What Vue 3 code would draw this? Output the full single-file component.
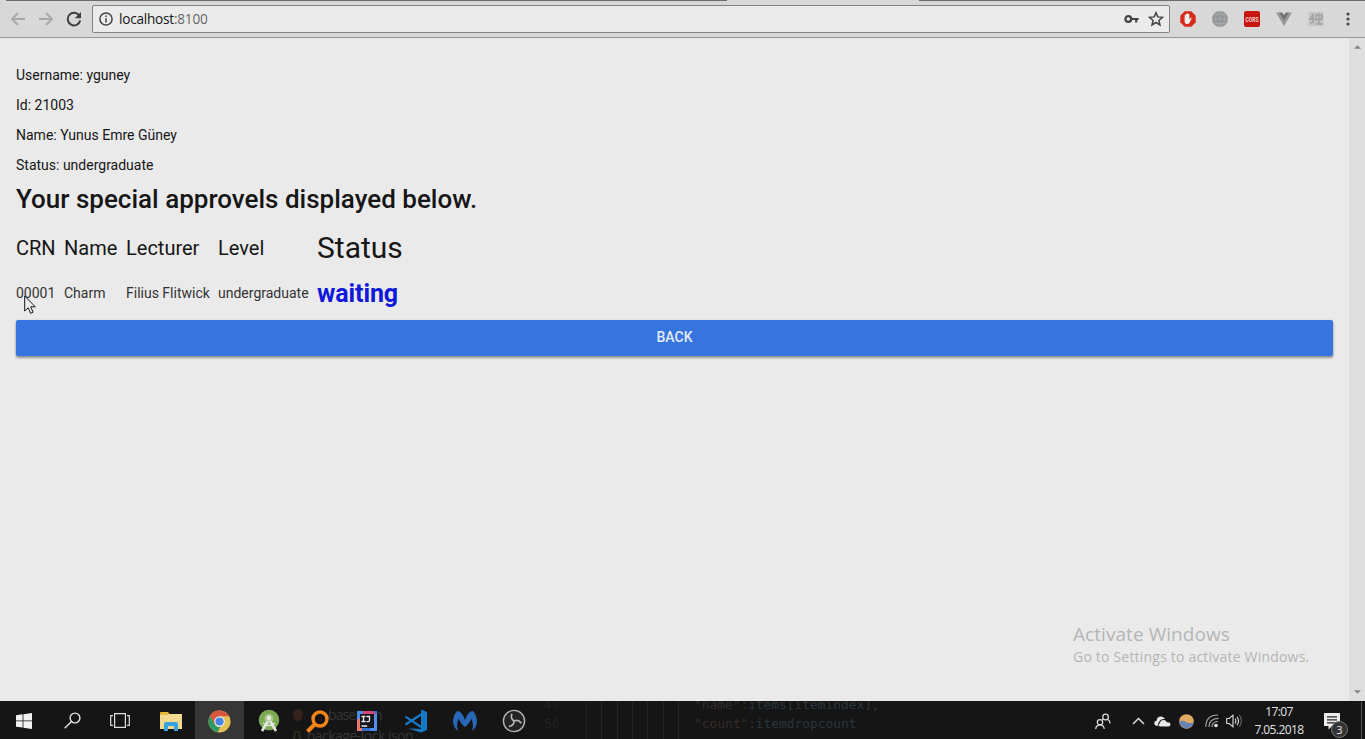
<script setup>
const info = [
  ['Username', 'yguney'],
  ['Id', '21003'],
  ['Name', 'Yunus Emre Güney'],
  ['Status', 'undergraduate'],
]
const columns = ['CRN', 'Name', 'Lecturer', 'Level', 'Status']
const row = ['00001', 'Charm', 'Filius Flitwick', 'undergraduate', 'waiting']
</script>

<template>
  <div class="screen">
    <header class="toolbar">
      <svg class="ico back" viewBox="0 0 16 16"><path d="M15 8H2M8 2 2 8l6 6" /></svg>
      <svg class="ico forward" viewBox="0 0 16 16"><path d="M1 8h13M8 2l6 6-6 6" /></svg>
      <svg class="ico reload" viewBox="0 0 16 16"><path d="M13.3 4.6A6.3 6.3 0 1 0 14.2 9.5" /><path class="solid" d="M15 1v6.3H8.8z" /></svg>
      <div class="omnibox">
        <svg class="site" viewBox="0 0 14 14"><circle cx="7" cy="7" r="6.1" /><path d="M7 6.2v4.2M7 3.4v1.6" /></svg>
        <span class="url">localhost<span class="port">:8100</span></span>
        <svg class="key" viewBox="0 0 15 10"><circle cx="4.3" cy="5" r="2.9" /><path d="M7 5h7.6M12.2 5v3.6" /></svg>
        <svg class="star" viewBox="0 0 16 16"><path d="m8 1.7 1.8 4.2 4.7.4-3.6 3.1 1.1 4.6L8 11.5 4 14l1.1-4.6-3.6-3.1 4.7-.4z" /></svg>
      </div>
      <div class="extensions">
        <svg viewBox="0 0 16 16">
          <path fill="#d8291c" d="M4.7.3h6.6l4.4 4.4v6.6l-4.4 4.4H4.7L.3 11.3V4.7z" />
          <path fill="#eee" d="M4.6 7.5V4.3q.5-.7 1.1 0V3.2q.6-.7 1.2 0v-.5q.7-.7 1.3 0v.6q.6-.6 1.2 0v5.3l1.2-1.6q.7-.5 1.2.1l-2.3 4.8q-.7 1.1-2.2 1.1-2.7 0-2.7-2.8z" />
        </svg>
        <svg viewBox="0 0 16 16"><circle cx="8" cy="8" r="8" fill="#929696" /><path fill="none" stroke="#a9adad" stroke-width=".8" d="M8 0v16M0 8h16M2 3.5h12M2 12.5h12M8 0C2 5 2 11 8 16M8 0c6 5 6 11 0 16" /></svg>
        <svg viewBox="0 0 16 16"><rect width="16" height="16" rx="2" fill="#c9150f" /><text x="8" y="10.7" text-anchor="middle" textLength="13" lengthAdjust="spacingAndGlyphs" class="cors">CORS</text></svg>
        <svg viewBox="0 0 16 16"><path fill="#989898" d="M0 1.5h4L8 8l4-6.5h4L8 15z" /><path fill="#707070" d="M3.2 1.5h3L8 4.3l1.8-2.8h3L8 9.5z" /></svg>
        <svg viewBox="0 0 16 16"><rect x=".5" y="1" width="15" height="14" fill="#c5c5c5" /><path fill="none" stroke="#a3a3a3" stroke-width="1.4" d="M2 9l3-6v8M1 8h6M8 3v7M7.5 4h6v4.5h-6M11 2v11M2 12l4-1M8 13h7M14 3v5" /></svg>
      </div>
      <svg class="menu" viewBox="0 0 4 14"><circle cx="2" cy="2" r="1.6" /><circle cx="2" cy="7" r="1.6" /><circle cx="2" cy="12" r="1.6" /></svg>
      <i class="frame-edge left"></i><i class="frame-edge right"></i>
    </header>

    <div class="viewport">
      <main class="page">
        <p v-for="[label, value] in info" :key="label">{{ label }}: {{ value }}</p>
        <h1>Your special approvels displayed below.</h1>
        <div class="table">
          <span v-for="(c, i) in columns" :key="c" class="head" :class="'h' + i">{{ c }}</span>
          <span v-for="(c, i) in row" :key="c" class="cell" :class="'c' + i">{{ c }}</span>
        </div>
        <button class="back-button">BACK</button>
      </main>
      <aside class="scrollbar">
        <svg viewBox="0 0 8 4"><path d="M0 4 4 0l4 4z" /></svg>
        <svg viewBox="0 0 8 4"><path d="M0 0h8L4 4z" /></svg>
      </aside>
      <div class="watermark">
        <div class="wm-title">Activate Windows</div>
        <div class="wm-sub">Go to Settings to activate Windows.</div>
      </div>
      <svg class="cursor" viewBox="0 0 12 20"><path d="M.7 1v15l3.5-3.3 2.4 5.6 2.5-1.1-2.4-5.4h4.6z" /></svg>
    </div>

    <footer class="taskbar">
      <div class="ghost">
        <span class="g-file">base.json</span>
        <span class="g-lock"><b>{}</b> package-lock.json</span>
        <span class="g-flame"></span>
        <span class="g-num n49">49</span><span class="g-num n50">50</span>
        <span class="g-guides"></span>
        <span class="g-name"><em>"name"</em>:items[itemindex],</span>
        <span class="g-count"><em>"count"</em>:itemdropcount</span>
      </div>
      <nav class="system">
        <svg width="16" height="16" viewBox="0 0 16 16"><path fill="#f2f2f2" d="M0 2.2 6.6 1.3v6.2H0zM7.4 1.2 16 0v7.5H7.4zM0 8.3h6.6v6.3L0 13.7zM7.4 8.3H16V16l-8.6-1.2z" /></svg>
        <svg width="17" height="17" viewBox="0 0 17 17"><g fill="none" stroke="#e6e6e6" stroke-width="1.4"><circle cx="11" cy="6" r="4.9" /><path d="M7.5 9.5.7 16.2" /></g></svg>
        <svg width="20" height="15" viewBox="0 0 20 15"><g fill="none" stroke="#dedede" stroke-width="1.2"><path d="M4.6.7h10.8v13.6H4.6zM3 2.7H.7v9.6H3M17 2.7h2.3v9.6H17" /></g></svg>
      </nav>
      <nav class="apps">
        <div class="slot"><svg width="22" height="19" viewBox="0 0 22 19"><path fill="#e8b83b" d="M0 1q0-1 1-1h7l1.5 2H22v6H0z" /><path fill="#f3d98f" d="M0 3h7.5L9 2h13v15H0z" /><path fill="#36a3df" d="M4 19v-7q0-2 2-2h10q2 0 2 2v7h-4v-5H8v5z" /></svg></div>
        <div class="slot active"><svg width="23" height="23" viewBox="0 0 24 24"><circle cx="12" cy="12" r="11.5" fill="#e5c054" /><path fill="#d8553f" d="M2 6.2A11.5 11.5 0 0 1 22 6.5H12L7 15z" /><path fill="#2d9b63" d="M2 6.2 7.2 15q2 3 5.7 2.6l-3 5.7A11.5 11.5 0 0 1 2 6.2z" /><circle cx="12" cy="12" r="5.5" fill="#eee" /><circle cx="12" cy="12" r="4.3" fill="#4586e8" /></svg></div>
        <div class="slot"><svg width="22" height="24" viewBox="0 0 22 24"><circle cx="11" cy="11" r="10.3" fill="#7ba954" /><circle cx="11" cy="9.5" r="4.6" fill="#a3c481" /><circle cx="11" cy="9" r="2.4" fill="#e5e8e0" /><path fill="none" stroke="#e3e7df" stroke-width="2.6" d="m10 12-6 10M12 12l6 10" /><path fill="none" stroke="#e3e7df" stroke-width="1.5" d="M5 14q6 5 12 0" /></svg></div>
        <div class="slot"><svg width="23" height="23" viewBox="0 0 23 23"><circle cx="14" cy="9" r="7" fill="none" stroke="#f48519" stroke-width="3.4" /><path stroke="#f48519" stroke-width="4" d="M9 14 1.5 21.5" /></svg></div>
        <div class="slot"><svg width="20" height="20" viewBox="0 0 20 20"><path fill="#2f6fd8" d="M0 0h20v20H0z" /><path fill="#d54778" d="M6 0h10l3 3-4 4H4z" /><path fill="#4e8fec" d="M0 0h6l-2 10H0zM15 6l5-4v18H13z" /><path fill="#e87a6c" d="M0 9 5 6v14H0z" /><path fill="#17151d" d="M3 3h14v14H3z" /><path fill="none" stroke="#eee" stroke-width="1.3" d="M4.5 5.5h4M6.5 5.5v5M4.5 10.5h4M9.5 5.5h3v3.8q0 1.3-1.5 1.3H9.5M4.5 15h5.7" /></svg></div>
        <div class="slot"><svg width="24" height="24" viewBox="0 0 24 24"><path fill="#1679c5" d="m17 .5 6 2.4v18l-6 2.6L4 19.5l13 .6z" /><path fill="none" stroke="#1679c5" stroke-width="2.2" d="M1.5 7.7 17 18M17 5.5 1.5 15.5" /></svg></div>
        <div class="slot"><svg width="24" height="22" viewBox="0 0 24 22"><path fill="#2867b5" d="M4 1q5 0 8 9 3-9 8-9 4 5 4 10.5T19 21q2-5-.4-12.2Q15 15 12 17 9 15 5.4 8.8 3 16 5 21 0 17 0 11.5T4 1z" /></svg></div>
        <div class="slot"><svg width="24" height="24" viewBox="0 0 24 24"><circle cx="12" cy="12" r="10.6" fill="#242424" stroke="#b5b5b5" stroke-width="1.4" /><path fill="none" stroke="#b5b5b5" stroke-width="1.7" d="M12 12Q8 9.2 10 4.8M12 12q4.5-1.8 7.2 2.2M12 12q.1 4.8-5 5.3" /></svg></div>
      </nav>
      <div class="tray">
        <svg class="people" width="17" height="17" viewBox="0 0 17 17"><g fill="none" stroke="#dcdcdc" stroke-width="1.25"><circle cx="10.6" cy="4" r="2.8" /><path d="M8.3 6q-.8.6-.9 1.2M12.6 6.4q2.2 1 2.5 4" /><circle cx="5" cy="9.2" r="2.7" /><path d="M.7 16q.4-4.1 4.3-4.1T9.2 16" /></g></svg>
        <svg class="up" width="13" height="8" viewBox="0 0 13 8"><path fill="none" stroke="#ddd" stroke-width="1.5" d="m1 7 5.5-5.5L12 7" /></svg>
        <svg class="cloud" width="17" height="11" viewBox="0 0 17 11"><path fill="#e8e8e8" d="M5.6 10.5Q4 8.5 6 7q.4-3 3.7-3 2.3 0 3.1 2.3h1q2.7.1 2.7 2.2 0 2-2.3 2z" /><path fill="#e8e8e8" d="M4.5 9.7H2.6Q.2 9.4.2 7.2.2 5 2.5 4.8 3 .5 7 .5q2.8 0 4 2.6Q6.4 2.6 5 6.2 3.2 7.4 4.5 9.7z" /></svg>
        <svg class="globe" width="15" height="15" viewBox="0 0 15 15"><circle cx="7.5" cy="7.5" r="7.3" fill="#e1aa62" /><path fill="#6683b3" d="M.2 7.6q3.5-2 6.7.4 3.6 2 7.8.2A7.3 7.3 0 0 1 .2 7.6z" /></svg>
        <svg class="wifi" width="14" height="14" viewBox="0 0 14 14"><g fill="none" stroke="#a9a9a9" stroke-width="1.2"><path d="M.8 12.8Q1 1 13 1M4 13q0-8.5 9.5-8.7M7 13q0-5.3 6-5.5" /></g><circle cx="11" cy="11.5" r="1.8" fill="#e2e2e2" /></svg>
        <svg class="volume" width="17" height="14" viewBox="0 0 17 14"><g fill="none" stroke="#ddd" stroke-width="1.1"><path d="M.7 4.5h2.5L7 1.2v11.6L3.2 9.5H.7zM9 4.5q1.7 2.5 0 5M11 2.7q3 4.3 0 8.6" /><path stroke="#666" d="M13.3 1q4.2 6 0 12" /></g></svg>
        <div class="clock"><span>17:07</span><span>7.05.2018</span></div>
        <div class="notice"><svg width="16" height="17" viewBox="0 0 16 17"><path fill="#ededed" d="M0 0h16v13H8l-3.5 3.5V13H0z" /><path stroke="#222" stroke-width="1.2" d="M3 3.8h10M3 6.8h10M3 9.8h10" /></svg><b>3</b></div>
        <i class="peek"></i>
      </div>
    </footer>
  </div>
</template>

<style>
body { margin: 0; overflow: hidden; }
</style>

<style scoped>
.screen { width: 1365px; height: 739px; display: flex; flex-direction: column; overflow: hidden; background: #eaeaea; color: #161616; font-family: Roboto, sans-serif; }
.screen * { box-sizing: border-box; }
svg { display: block; flex: none; }

.toolbar { position: relative; height: 38px; flex: none; display: flex; align-items: center; background: #d9d8d9; border-bottom: 1px solid #969596; padding: 1px 15px 0 10px; }
.ico { width: 16px; height: 16px; fill: none; stroke: #a9a8a9; stroke-width: 1.9; }
.forward { margin-left: 12px; }
.reload { margin-left: 12px; stroke: #3f3f3f; stroke-width: 2; }
.reload .solid { fill: #3f3f3f; stroke: none; }
.omnibox { width: 1078px; height: 28px; margin-left: 10px; border: 1px solid #848384; border-radius: 2px; background: #ebebeb; display: flex; align-items: center; padding: 0 5px 0 6px; }
.site { width: 14px; height: 14px; fill: none; stroke: #444; stroke-width: 1.5; }
.url { margin-left: 6px; flex: 1; font: 13.6px/20px "Open Sans", sans-serif; letter-spacing: -.22px; color: #161616; }
.port { color: #666; }
.key { width: 15px; height: 10px; fill: none; stroke: #444; stroke-width: 2.2; margin-right: 9px; }
.star { width: 16px; height: 16px; fill: none; stroke: #444; stroke-width: 1.5; }
.extensions { display: flex; gap: 16px; margin-left: 10px; }
.extensions svg { width: 16px; height: 16px; }
.cors { font: bold 7.5px Roboto, sans-serif; fill: #f2dada; }
.menu { width: 4px; height: 14px; margin-left: auto; fill: #484848; }
.frame-edge { position: absolute; top: 0; height: 1px; background: #716b70; }
.frame-edge.left { left: 6px; width: 721px; }
.frame-edge.right { left: 919px; right: 0; }

.viewport { position: relative; flex: 1; min-height: 0; display: flex; }
.page { flex: 1; padding: 22px 16px 0; }
p { margin: 0; height: 30px; line-height: 31px; font-size: 14px; }
h1 { margin: 4px 0 0; height: 30px; font-size: 26px; line-height: 30px; font-weight: 500; white-space: nowrap; }
.table { display: grid; grid-template-columns: 48px 62px 92px 99px 100px; grid-template-rows: 48px 42px; margin-top: 9px; align-items: center; white-space: nowrap; }
.head { font-size: 20px; padding-top: 1px; }
.h4 { font-size: 30px; padding-top: 0; }
.cell { font-size: 14px; color: #333; padding-top: 1px; }
.c4 { color: #1018da; font-size: 25px; font-weight: 700; letter-spacing: -.1px; padding-top: 2px; }
.back-button { display: block; width: 100%; height: 36.5px; margin-top: 6.5px; padding: 0 0 2px; border: 0; border-radius: 2px; background: #3674df; color: #e4ebf7; font: 500 14px/32px Roboto, sans-serif; box-shadow: 0 2px 2px rgba(0,0,0,.25), 0 1px 3px rgba(0,0,0,.25); }
.scrollbar { width: 16px; background: #dfdfdf; display: flex; flex-direction: column; justify-content: space-between; align-items: center; padding: 7px 0; }
.scrollbar svg { width: 7px; height: 4px; fill: #858585; }
.watermark { position: absolute; left: 1073px; top: 584px; color: #b5b5b5; font-family: "Open Sans", sans-serif; white-space: nowrap; }
.wm-title { font-size: 19px; line-height: 25px; letter-spacing: .06px; }
.wm-sub { font-size: 14px; line-height: 20px; letter-spacing: .2px; }
.cursor { position: absolute; left: 24px; top: 257px; width: 12px; height: 20px; fill: #eee; stroke: #171717; stroke-width: 1; }

.taskbar { position: relative; height: 38px; flex: none; display: flex; align-items: center; background: #151515; overflow: hidden; }
.system { display: flex; align-items: center; width: 146px; position: relative; padding-top: 1px; }
.system svg { margin: 0 16px; }
.system svg:nth-child(3) { margin-left: 13px; margin-right: 0; }
.apps { display: flex; position: relative; height: 38px; }
.slot { width: 49px; display: flex; align-items: center; justify-content: center; padding-top: 2px; }
.slot.active { background: #363636; }
.tray { position: relative; margin-left: auto; width: 273px; display: flex; align-items: center; color: #e2e2e2; height: 38px; padding: 2px 0 0 3px; }
.up { margin-left: 20px; }
.cloud { margin-left: 9px; }
.globe { margin-left: 8px; }
.wifi { margin-left: 11px; }
.volume { margin-left: 7px; }
.clock { margin-left: 9px; width: 54px; display: flex; flex-direction: column; align-items: center; font: 12px/18px "Open Sans", sans-serif; letter-spacing: -.6px; white-space: nowrap; }
.notice { position: relative; margin-left: 18px; }
.notice b { position: absolute; left: 7px; top: 8px; width: 17px; height: 17px; border: 1px solid #777; border-radius: 50%; background: #343434; color: #e5e5e5; font: 11px/15px "Open Sans", sans-serif; text-align: center; }
.peek { width: 1px; height: 38px; margin: 0 3px 0 auto; background: #555; }
.ghost { position: absolute; inset: 0; color: #353535; font: 14px/18px "Open Sans", sans-serif; white-space: nowrap; }
.ghost span { position: absolute; }
.ghost .g-file { left: 328px; top: 5px; letter-spacing: -.9px; }
.ghost .g-lock { left: 292px; top: 26px; letter-spacing: -.5px; }
.g-lock b { font-weight: 400; color: #34391f; margin-right: 2px; }
.ghost .g-flame { left: 293px; top: 8px; width: 10px; height: 12px; border-radius: 50% 40% 50% 50%; background: #35221a; }
.ghost .g-num, .ghost .g-name, .ghost .g-count { font: 12.85px/18px "DejaVu Sans Mono", monospace; color: #2b363c; }
.ghost .g-num { left: 544px; color: #222; }
.ghost .n49 { top: -5px; }
.ghost .n50 { top: 14px; }
.ghost .g-guides { left: 586px; top: 0; width: 93px; height: 38px; background: repeating-linear-gradient(90deg, #222 0 1px, transparent 1px 15.3px); }
.ghost .g-name { left: 694px; top: -5px; }
.ghost .g-count { left: 694px; top: 14px; }
.ghost em { font-style: normal; color: #332c2a; }
</style>
